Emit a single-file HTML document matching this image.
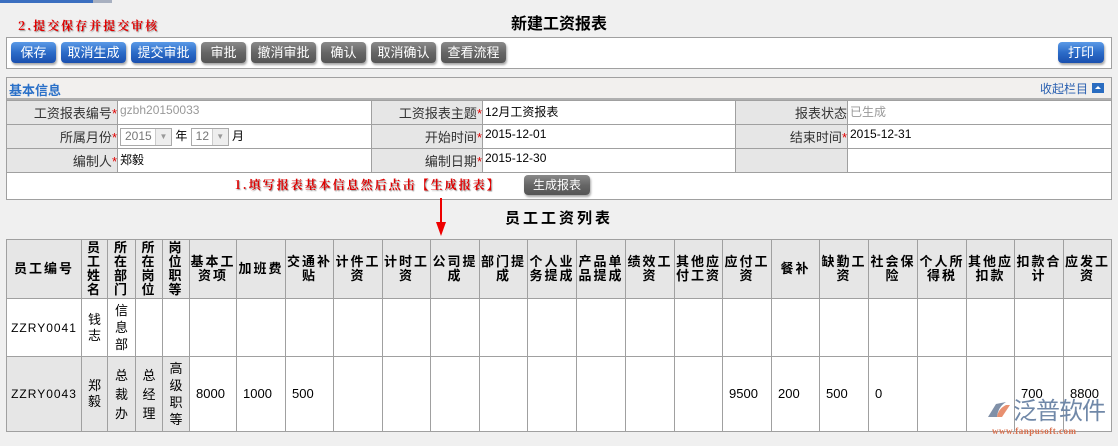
<!DOCTYPE html>
<html><head><meta charset="utf-8"><style>
*{margin:0;padding:0;box-sizing:border-box}
body{width:1118px;height:446px;background:#f0f0f0;position:relative;overflow:hidden;font-family:"Liberation Sans","Noto Sans CJK SC",sans-serif;font-size:12px;color:#000}
.a{position:absolute}
.btn{position:absolute;top:42px;height:21px;border-radius:4px;color:#fff;font-size:13px;line-height:21px;text-align:center;box-shadow:1px 2px 2px rgba(0,0,0,.35)}
.bl{background:linear-gradient(#5b9ae6,#2c6cc8 50%,#1a4fae)}
.gr{background:linear-gradient(#8a8a8a,#666 50%,#555)}
.red{color:#e00000;font-weight:bold;font-family:"Noto Serif CJK SC",serif;text-shadow:1px 1px 1px #999;letter-spacing:2px}
table{border-collapse:collapse}
td{border:1px solid #a0a0a0;padding:0}
.info td{height:24px;vertical-align:top}
.lab{background:#e6e6e6;text-align:right;color:#333;font-size:13px;padding-top:2px!important}
.val{background:#fff;font-size:12px;padding:2px 0 0 2px!important}
.st{color:#e00000}
.grid td{text-align:center;vertical-align:middle;font-size:13px;line-height:16px;overflow:hidden}
.grid th{background:#e6e6e6;border:1px solid #a0a0a0;font-size:13px;font-weight:bold;line-height:14px;letter-spacing:2px;padding:0;overflow:hidden}
.g{background:#e6e6e6}
.w{background:#fff}
.n{text-align:left!important;padding-left:6px!important}
</style></head><body>
<div class="a" style="left:0;top:0;width:93px;height:3px;background:#3b6fc0"></div>
<div class="a" style="left:93px;top:0;width:19px;height:3px;background:#a8b0c0"></div>
<div class="a" style="left:0;top:10px;width:1118px;text-align:center;font-size:16px;font-weight:bold">新建工资报表</div>
<div class="a red" style="left:18px;top:17px;font-size:12px">2.提交保存并提交审核</div>
<div class="a" style="left:6px;top:37px;width:1106px;height:32px;background:#fff;border:1px solid #a0a0a0"></div>
<div class="btn bl" style="left:11px;width:45px">保存</div>
<div class="btn bl" style="left:61px;width:65px">取消生成</div>
<div class="btn bl" style="left:131px;width:65px">提交审批</div>
<div class="btn gr" style="left:201px;width:45px">审批</div>
<div class="btn gr" style="left:251px;width:65px">撤消审批</div>
<div class="btn gr" style="left:321px;width:45px">确认</div>
<div class="btn gr" style="left:371px;width:65px">取消确认</div>
<div class="btn gr" style="left:441px;width:65px">查看流程</div>
<div class="btn bl" style="left:1058px;width:46px">打印</div>

<div class="a" style="left:6px;top:77px;width:1106px;height:123px;background:#fff;border:1px solid #a0a0a0"></div>
<div class="a" style="left:7px;top:78px;width:1104px;height:22px;background:#f2f0ee;border-bottom:2px solid #b0b0b0"></div>
<div class="a" style="left:9px;top:80px;color:#2a70c8;font-weight:bold;font-size:13px">基本信息</div>
<div class="a" style="left:1040px;top:80px;color:#2a60b0;font-size:12px">收起栏目</div>
<div class="a" style="left:1092px;top:83px;width:12px;height:10px;background:#2a6cc0"><div style="position:absolute;left:3px;top:3px;width:0;height:0;border-left:3px solid transparent;border-right:3px solid transparent;border-bottom:3px solid #fff"></div></div>
<table class="info a" style="left:6px;top:100px;width:1106px">
<colgroup><col style="width:111px"><col style="width:254px"><col style="width:111px"><col style="width:253px"><col style="width:112px"><col></colgroup>
<tr><td class="lab">工资报表编号<span class="st">*</span></td><td class="val" style="color:#999">gzbh20150033</td><td class="lab">工资报表主题<span class="st">*</span></td><td class="val">12月工资报表</td><td class="lab">报表状态</td><td class="val" style="color:#999">已生成</td></tr>
<tr><td class="lab">所属月份<span class="st">*</span></td><td class="val"><span style="display:inline-block;border:1px solid #aaa;width:52px;height:18px;color:#777;padding-left:4px;position:relative">2015<span style="position:absolute;right:0;top:0;width:16px;height:16px;background:#eee;border-left:1px solid #ccc;color:#999;font-size:8px;text-align:center;line-height:16px">▼</span></span> 年 <span style="display:inline-block;border:1px solid #aaa;width:38px;height:18px;color:#777;padding-left:4px;position:relative">12<span style="position:absolute;right:0;top:0;width:16px;height:16px;background:#eee;border-left:1px solid #ccc;color:#999;font-size:8px;text-align:center;line-height:16px">▼</span></span> 月</td><td class="lab">开始时间<span class="st">*</span></td><td class="val">2015-12-01</td><td class="lab">结束时间<span class="st">*</span></td><td class="val">2015-12-31</td></tr>
<tr><td class="lab">编制人<span class="st">*</span></td><td class="val">郑毅</td><td class="lab">编制日期<span class="st">*</span></td><td class="val">2015-12-30</td><td class="lab"></td><td class="val"></td></tr>
</table>
<div class="a red" style="left:235px;top:176px;font-size:12px">1.填写报表基本信息然后点击【生成报表】</div>
<div class="btn gr" style="left:524px;top:175px;width:66px;height:20px;line-height:20px;font-size:12px">生成报表</div>
<div class="a" style="left:440px;top:198px;width:2px;height:26px;background:#e00"></div>
<div class="a" style="left:436px;top:222px;width:0;height:0;border-left:5px solid transparent;border-right:5px solid transparent;border-top:14px solid #e00"></div>
<div class="a" style="left:0;top:207px;width:1118px;text-align:center;font-size:15px;font-weight:bold;letter-spacing:3px">员工工资列表</div>

<table class="grid a" style="left:6px;top:239px;width:1106px">
<colgroup><col style="width:75px"><col style="width:26px"><col style="width:28px"><col style="width:27px"><col style="width:27px"><col style="width:47px"><col style="width:49px"><col style="width:48px"><col style="width:49px"><col style="width:48px"><col style="width:49px"><col style="width:48px"><col style="width:49px"><col style="width:49px"><col style="width:49px"><col style="width:48px"><col style="width:49px"><col style="width:48px"><col style="width:49px"><col style="width:49px"><col style="width:49px"><col style="width:48px"><col style="width:49px"><col></colgroup>
<tr style="height:59px"><th>员工编号</th><th>员<br>工<br>姓<br>名</th><th>所<br>在<br>部<br>门</th><th>所<br>在<br>岗<br>位</th><th>岗<br>位<br>职<br>等</th><th>基本工资项</th><th>加班费</th><th>交通补贴</th><th>计件工资</th><th>计时工资</th><th>公司提成</th><th>部门提成</th><th>个人业务提成</th><th>产品单品提成</th><th>绩效工资</th><th>其他应付工资</th><th>应付工资</th><th>餐补</th><th>缺勤工资</th><th>社会保险</th><th>个人所得税</th><th>其他应扣款</th><th>扣款合计</th><th>应发工资</th></tr>
<tr style="height:58px" class="w"><td style="letter-spacing:1px;font-size:12px">ZZRY0041</td><td>钱<br>志</td><td style="line-height:17px">信<br>息<br>部</td><td></td><td></td><td></td><td></td><td></td><td></td><td></td><td></td><td></td><td></td><td></td><td></td><td></td><td></td><td></td><td></td><td></td><td></td><td></td><td></td><td></td></tr>
<tr style="height:75px" class="w"><td class="g" style="letter-spacing:1px;font-size:12px">ZZRY0043</td><td class="g">郑<br>毅</td><td class="g" style="line-height:19px">总<br>裁<br>办</td><td class="g" style="line-height:19px">总<br>经<br>理</td><td class="g" style="line-height:17px">高<br>级<br>职<br>等</td><td class="n">8000</td><td class="n">1000</td><td class="n">500</td><td></td><td></td><td></td><td></td><td></td><td></td><td></td><td></td><td class="n">9500</td><td class="n">200</td><td class="n">500</td><td class="n">0</td><td></td><td></td><td class="n">700</td><td class="n">8800</td></tr>
</table>
<div class="a" style="left:986px;top:401px;width:26px;height:18px">
<svg width="26" height="18" viewBox="0 0 26 18"><path d="M2 16 L10 3 L20 1 Q12 6 11 16 Z" fill="#8090a8"/><path d="M11 16 Q12 8 20 4 L24 4 L16 16 Z" fill="#e89070"/></svg></div>
<div class="a" style="left:1013px;top:394px;font-size:24px;color:#7088a8;letter-spacing:-1px;font-family:'Noto Sans CJK SC',sans-serif;line-height:30px">泛普软件</div>
<div class="a" style="left:992px;top:426px;font-size:9px;color:#d8704e;font-weight:bold;font-family:'Liberation Serif',serif;letter-spacing:0.5px">www.fanpusoft.com</div>
</body></html>
